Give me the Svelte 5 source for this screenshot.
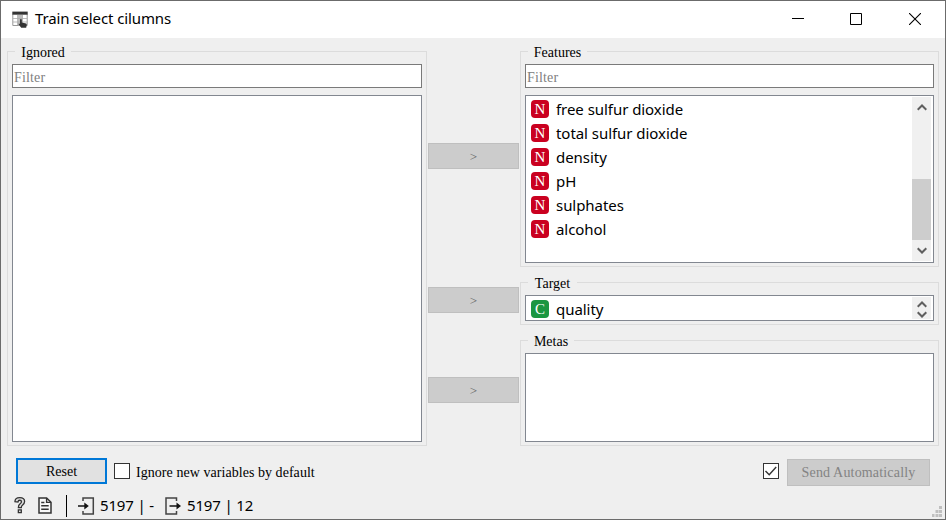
<script>
  const features = ['free sulfur dioxide', 'total sulfur dioxide', 'density', 'pH', 'sulphates', 'alcohol'];
</script>

{#snippet chevron(up)}
  <svg class="chevron" width="10" height="7" viewBox="0 0 10 7">
    <path d={up ? 'M.7 5.8 5 1.5l4.3 4.3' : 'M.7 1.2 5 5.5l4.3-4.3'} fill="none" stroke="#5f5f5f" stroke-width="2" />
  </svg>
{/snippet}

{#snippet variable(kind, name)}
  <div class="variable">
    <span class="kind" class:cat={kind === 'C'}>{kind}</span>
    <span class="name">{name}</span>
  </div>
{/snippet}

<div class="window">
  <header>
    <svg class="app-icon" width="17" height="17" viewBox="0 0 17 17">
      <path d="M.8 3h14.4v11.5H.8z" fill="#fff" stroke="#999" />
      <path d="M6 4h4.5v10.5H6z" fill="#bbb" />
      <path d="M1 7.5h14M1 11h14M5.5 4v10M10.5 4v10" stroke="#aaa" stroke-width=".8" />
      <path d="M.3 .6h15.4v3H.3z" fill="#333" />
      <path d="M8 8.9q0-.8.9-.8t.9.8v2.7l4.3.9q.8.3.7 1.2l-.6 3H9.2l-2.8-3.7q.5-1 1.6-.1z" fill="#333" />
    </svg>
    <h1>Train select cilumns</h1>
    <div class="controls">
      <svg width="12" height="12" viewBox="0 0 12 12"><path d="M0 5.5h12" stroke="#000" /></svg>
      <svg width="12" height="12" viewBox="0 0 12 12"><path d="M.5.5h11v11H.5z" fill="none" stroke="#000" /></svg>
      <svg class="close" width="12" height="12" viewBox="0 0 12 12"><path d="m0 0 12 12M12 0 0 12" stroke="#000" stroke-width="1.1" /></svg>
    </div>
  </header>

  <main>
    <section class="group ignored">
      <h2 style="width: 56px">Ignored</h2>
      <div class="filter">Filter</div>
      <div class="list"></div>
    </section>

    <div class="moves">
      <button disabled>&gt;</button>
      <button disabled>&gt;</button>
      <button disabled>&gt;</button>
    </div>

    <div class="right">
      <section class="group features">
        <h2 style="width: 59px">Features</h2>
        <div class="filter">Filter</div>
        <div class="list">
          <div class="rows">
            {#each features as f}{@render variable('N', f)}{/each}
          </div>
          <div class="scroll">
            {@render chevron(true)}
            <div class="thumb"></div>
            {@render chevron(false)}
          </div>
        </div>
      </section>
      <section class="group target">
        <h2 style="width: 49px">Target</h2>
        <div class="list">
          <div class="rows">{@render variable('C', 'quality')}</div>
          <div class="scroll">{@render chevron(true)}{@render chevron(false)}</div>
        </div>
      </section>
      <section class="group metas">
        <h2 style="width: 46px">Metas</h2>
        <div class="list"></div>
      </section>
    </div>
  </main>

  <div class="actions">
    <button class="reset">Reset</button>
    <span class="box"></span>
    <span class="label">Ignore new variables by default</span>
    <span class="box checked">
      <svg width="14" height="14" viewBox="0 0 14 14"><path d="m1.5 7 3.7 3.8L12.2 3" fill="none" stroke="#333" stroke-width="1.4" /></svg>
    </span>
    <button class="send" disabled>Send Automatically</button>
  </div>

  <footer>
    <svg class="help" width="12" height="19" viewBox="0 0 13 19">
      <path d="M1 5.4C1 2.5 3.2 1 6.2 1s5.3 1.6 5.3 4.3c0 2.2-1.3 3.1-2.5 4-.9.6-1.1 1-1.1 2.6H4.7c0-2.4.5-3.3 1.9-4.3 1-.7 1.5-1.2 1.5-2.2 0-1-.7-1.6-1.8-1.6-1.2 0-1.9.6-2 1.9z" fill="#ddd" stroke="#333" stroke-width="1.4" />
      <path d="M4.7 14.2h3.2v3H4.7z" fill="#ddd" stroke="#333" stroke-width="1.4" />
    </svg>
    <svg class="doc" width="14" height="17" viewBox="0 0 14 17">
      <path d="M1 1h7.6L13 5.3V16H1z" fill="#f8f8f8" stroke="#333" stroke-width="1.5" />
      <path d="M8.6 1v4.4H13M3.2 5.5h3.2M3.2 8.8h7.5M3.2 12.3h7.5" fill="none" stroke="#333" stroke-width="1.4" />
    </svg>
    <span class="divider"></span>
    <svg class="in" width="17" height="18" viewBox="0 0 17 18">
      <path d="M5 4V1h10.3v16H5v-3" fill="none" stroke="#444" stroke-width="1.5" />
      <path d="M0 9h8" stroke="#111" stroke-width="1.5" /><path d="m6.3 5.5 4.5 3.5-4.5 3.5z" fill="#111" />
    </svg>
    <span class="count first">5197 | -</span>
    <svg class="out" width="17" height="18" viewBox="0 0 17 18">
      <path d="M11.5 4V1H1v16h10.5v-3" fill="none" stroke="#444" stroke-width="1.5" />
      <path d="M4.5 9H13" stroke="#111" stroke-width="1.5" /><path d="M11.5 5.5 16 9l-4.5 3.5z" fill="#111" />
    </svg>
    <span class="count">5197 | 12</span>
    <svg class="grip" width="10" height="11" viewBox="0 0 10 11">
      <path d="M7 0h3v3H7zM3.5 4h3v3h-3zM7 4h3v3H7zM0 8h2.5v3H0zM3.5 8h3v3h-3zM7 8h3v3H7z" fill="#bfbfbf" />
    </svg>
  </footer>
</div>

<style>
  :global(body) { margin: 0; }
  .window, .window * { box-sizing: border-box; }
  svg { display: block; flex: none; }
  .window {
    width: 946px; height: 520px; border: 1px solid #6b6b6b; background: #efefef;
    display: flex; flex-direction: column; overflow: hidden;
    font: 14px/18px 'Liberation Serif', serif; color: #000;
  }
  header { height: 37px; flex: none; background: #fff; display: flex; align-items: center; padding: 0 24px 0 11px; }
  h1 { margin: -3px 0 0 6px; font: 15px/20px 'Noto Sans', sans-serif; letter-spacing: -0.1px; white-space: nowrap; }
  .controls { margin: -1px 0 0 auto; display: flex; gap: 46px; }
  .close { margin-left: 1px; }
  main { display: flex; height: 408px; flex: none; padding: 13px 6px 0; }
  .group { border: 1px solid #dcdcdc; padding: 0 4px; display: flex; flex-direction: column; }
  .ignored { width: 420px; height: 395px; }
  h2 {
    margin: -9px 0 0 3px; height: 18px; flex: none; background: #efefef; padding-top: 1px;
    font: 14px/18px 'Liberation Serif', serif; text-align: center; white-space: nowrap;
  }
  .filter { height: 24px; flex: none; margin: 3px 0 7px; border: 1px solid #7a7a7a; background: #fff; color: #808080; padding: 4px 1px 0; letter-spacing: .15px; }
  .list { flex: 1; min-height: 0; border: 1px solid #828790; background: #fff; display: flex; overflow: hidden; margin-bottom: 3px; }
  .moves { width: 91px; margin: 0 1px; padding-top: 92px; display: flex; flex-direction: column; flex: none; }
  button { font: 14px/18px 'Liberation Serif', serif; padding: 0; flex: none; white-space: nowrap; }
  .moves button { height: 26px; border: 1px solid #bfbfbf; background: #ccc; color: #666; font-size: 13px; padding-top: 1px; }
  .moves button:nth-child(2) { margin-top: 118px; }
  .moves button:nth-child(3) { margin-top: 64px; }
  .right { width: 419px; flex: none; }
  .features { height: 216px; }
  .target { height: 43px; margin-top: 15px; }
  .metas { height: 106px; margin-top: 15px; }
  .target h2, .metas h2 { margin-bottom: 3px; }
  .rows { flex: 1; padding: 1px 0 0 5px; }
  .variable { height: 24px; display: flex; align-items: center; }
  .kind { width: 18px; height: 18px; border-radius: 4px; background: #ca0020; color: #fff; font-size: 15px; line-height: 18px; text-align: center; }
  .kind.cat { background: #1a9641; }
  .name { margin-left: 7px; font: 15px/22px 'Noto Sans', sans-serif; letter-spacing: -0.05px; white-space: nowrap; }
  .scroll { width: 19px; margin: 1px 2px 1px 0; background: #f0f0f0; display: flex; flex-direction: column; align-items: center; padding: 7px 0; }
  .thumb { width: 19px; height: 61px; background: #cdcdcd; margin: 68px 0 7px; flex: none; }
  .target .scroll { padding: 4px 0 1px; justify-content: space-between; }
  .actions { display: flex; align-items: center; height: 28px; margin-top: 12px; padding: 0 15px; flex: none; }
  .reset { width: 91px; height: 26px; border: 2px solid #0078d7; background: #e1e1e1; color: #000; margin-bottom: 2px; padding: 2px 0 0; }
  .box { width: 16px; height: 16px; border: 1px solid #333; background: #fff; margin: -2px 7px 0; flex: none; }
  .label { margin: 2px 0 0 -1px; letter-spacing: .05px; white-space: nowrap; }
  .checked { margin-left: auto; margin-right: 8px; }
  .send { width: 143px; height: 27px; border: 1px solid #bfbfbf; background: #ccc; color: #838383; letter-spacing: .17px; padding-top: 1px; }
  footer { display: flex; align-items: center; height: 33px; padding: 6px 3px 0 13px; }
  .doc { margin-left: 12px; }
  .divider { width: 1px; height: 22px; background: #000; margin: 0 11px 0 14px; }
  .count { font: 15px/20px 'Noto Sans', sans-serif; letter-spacing: -0.15px; white-space: nowrap; margin: -1px 0 0 5px; }
  .first { width: 54px; margin-right: 11px; }
  .grip { margin-left: auto; align-self: flex-end; margin-bottom: 2px; }
</style>
